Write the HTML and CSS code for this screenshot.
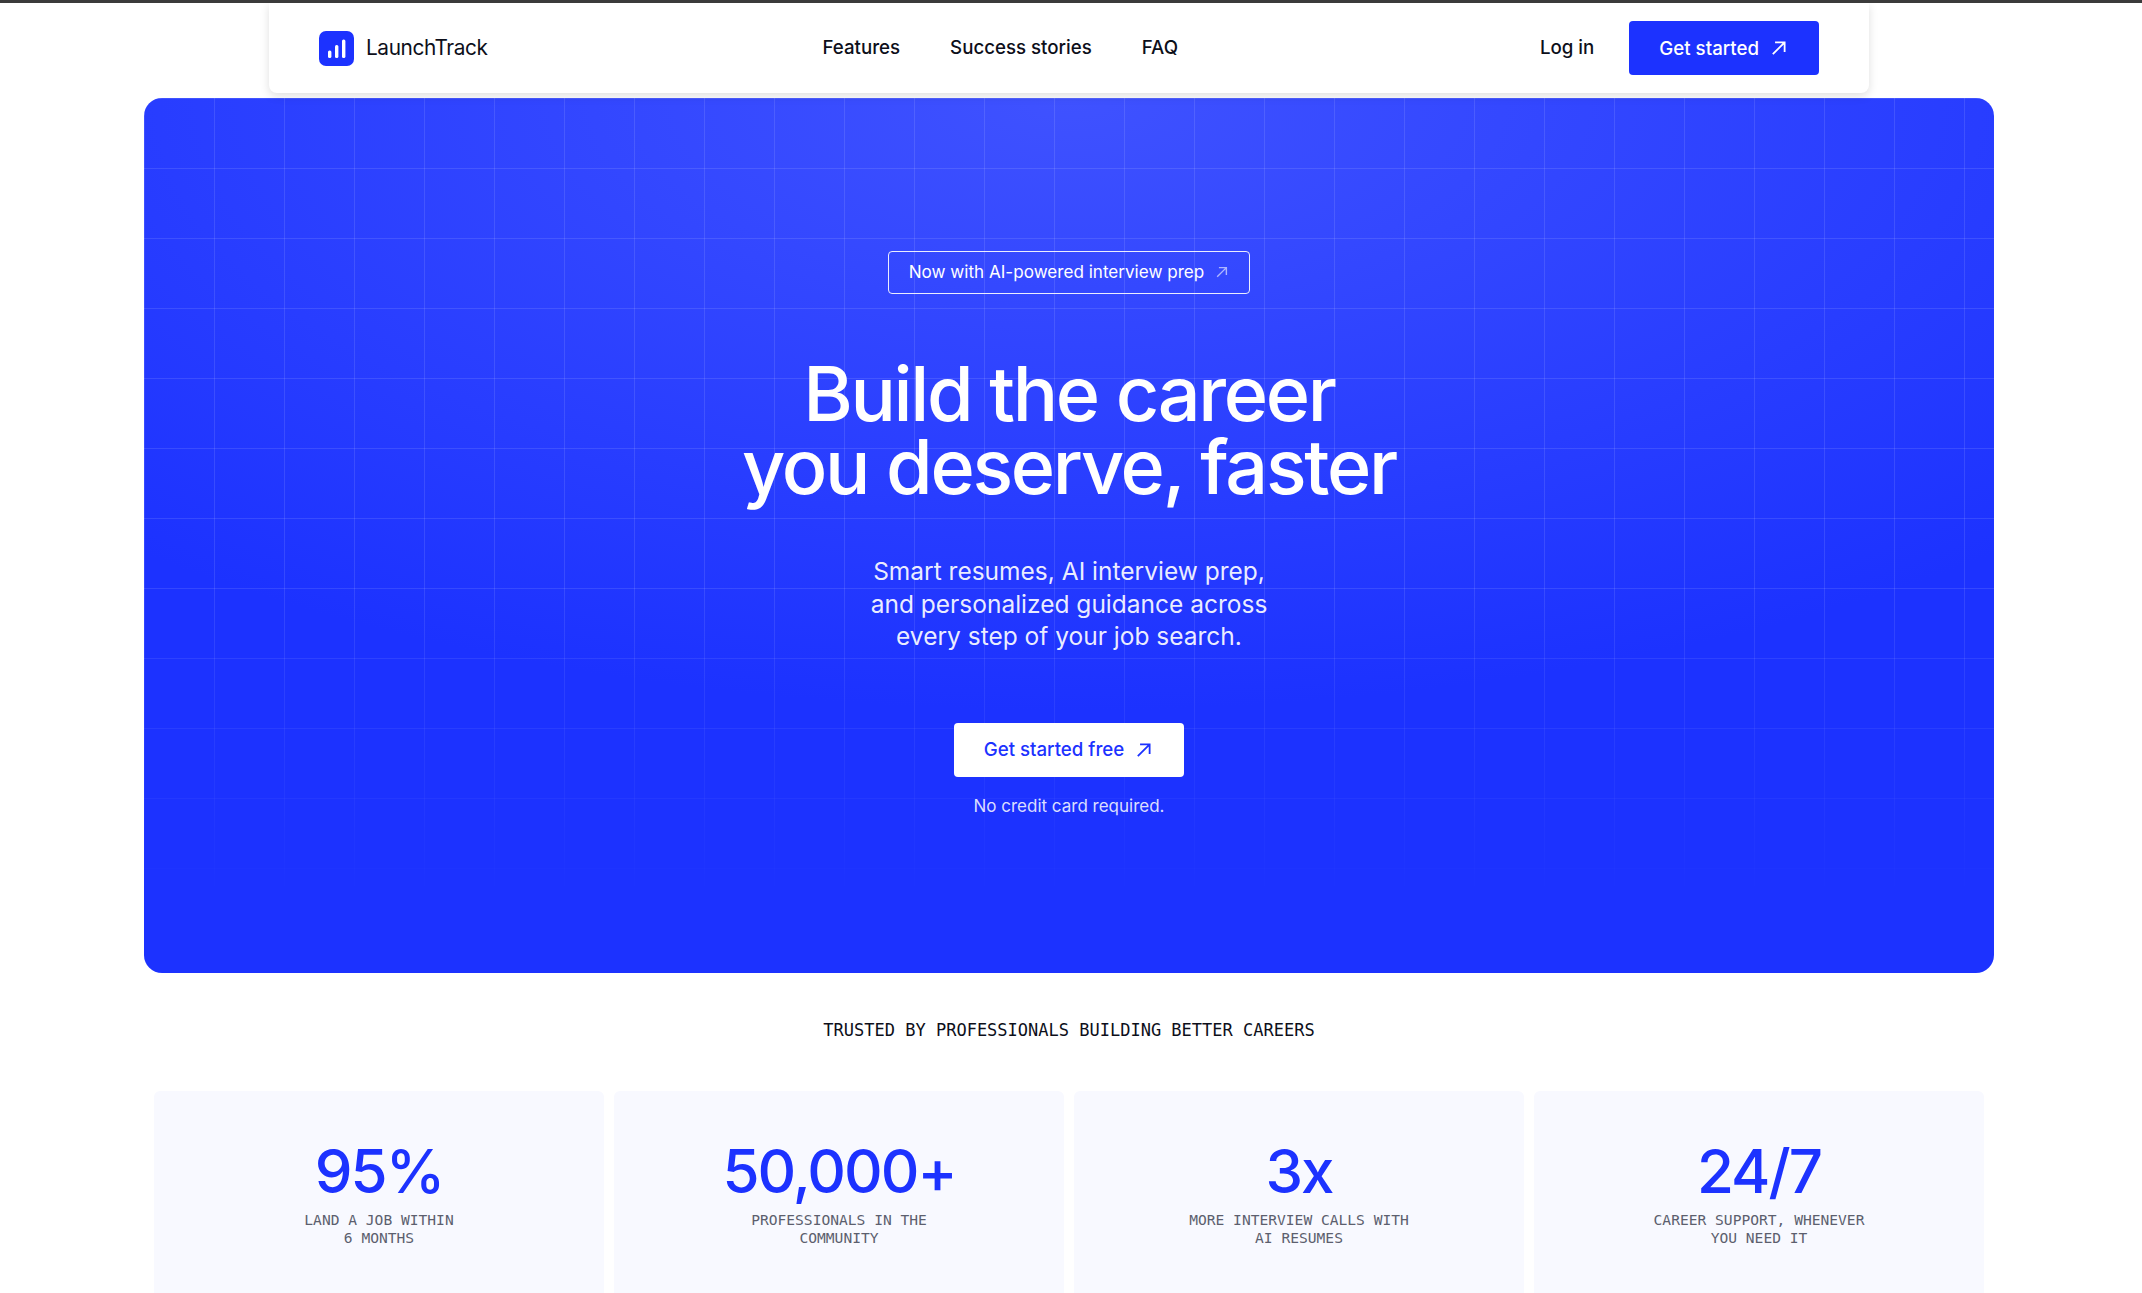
FILE: index.html
```html
<!DOCTYPE html>
<html lang="en">
<head>
    <meta charset="UTF-8" />
    <meta name="viewport" content="width=device-width, initial-scale=1.0"/>
    <title>LaunchTrack</title>
    <link rel="stylesheet" href="styles.css">
</head>
<body>

<header class="topbar">
    <nav class="nav">
        <a href="#" class="brand">
            <span class="brand-mark">
                <svg viewBox="0 0 35 35" width="35" height="35">
                    <rect x="9" y="19.5" width="3.4" height="7.5" rx="1.5" />
                    <rect x="16" y="14" width="3.4" height="13" rx="1.5" />
                    <rect x="23" y="8.5" width="3.4" height="18.5" rx="1.5" />
                </svg>
            </span>
            <span class="brand-name">LaunchTrack</span>
        </a>
        <div class="nav-links">
            <a href="#">Features</a>
            <a href="#">Success stories</a>
            <a href="#">FAQ</a>
        </div>
        <div class="nav-actions">
            <a href="#" class="login">Log in</a>
            <a href="#" class="btn btn-blue">
                Get started
                <svg class="arrow" viewBox="0 0 16 16" width="18" height="18"><path d="M2.5 13.5 13 3M4.5 3H13v8.5" /></svg>
            </a>
        </div>
    </nav>
</header>

<section class="hero">
    <a href="#" class="pill">
        Now with AI-powered interview prep
        <svg class="arrow arrow-small" viewBox="0 0 16 16" width="14" height="14"><path d="M2.5 13.5 13 3M4.5 3H13v8.5" /></svg>
    </a>
    <h1>Build the career<br>you deserve, faster</h1>
    <p class="lead">Smart resumes, AI interview prep,<br>and personalized guidance across<br>every step of your job search.</p>
    <a href="#" class="btn btn-white">
        Get started free
        <svg class="arrow" viewBox="0 0 16 16" width="18" height="18"><path d="M2.5 13.5 13 3M4.5 3H13v8.5" /></svg>
    </a>
    <p class="note">No credit card required.</p>
</section>

<section class="trusted">
    <h2>TRUSTED BY PROFESSIONALS BUILDING BETTER CAREERS</h2>
    <div class="stats">
        <div class="stat">
            <div class="stat-num">95%</div>
            <div class="stat-label">LAND A JOB WITHIN<br>6 MONTHS</div>
        </div>
        <div class="stat">
            <div class="stat-num">50,000+</div>
            <div class="stat-label">PROFESSIONALS IN THE<br>COMMUNITY</div>
        </div>
        <div class="stat">
            <div class="stat-num">3x</div>
            <div class="stat-label">MORE INTERVIEW CALLS WITH<br>AI RESUMES</div>
        </div>
        <div class="stat">
            <div class="stat-num">24/7</div>
            <div class="stat-label">CAREER SUPPORT, WHENEVER<br>YOU NEED IT</div>
        </div>
    </div>
</section>

</body>
</html>
```
FILE: styles.css
```css
html, body {
    height: 100%;
    overflow: hidden;
}
body {
    font-family: Inter, "Liberation Sans", sans-serif;
    color: #0d0f1a;
    background: white;
    margin: 0;
    padding-right: 4px;
    border-top: 3px solid #3b3b3b;
    box-sizing: border-box;
}
a {
    color: inherit;
    text-decoration: none;
}
.topbar {
    display: flex;
    justify-content: center;
    height: 95px;
}
.nav {
    width: 1600px;
    height: 90px;
    box-sizing: border-box;
    padding: 0 50px;
    background: white;
    border-radius: 0 0 8px 8px;
    box-shadow: 0 3px 10px rgba(0, 0, 0, 0.13);
    display: flex;
    align-items: center;
    position: relative;
    z-index: 2;
}
.brand {
    display: flex;
    align-items: center;
    gap: 12px;
    font-size: 20.8px;
    letter-spacing: -0.4px;
}
.brand-name {
    padding-bottom: 2px;
}
.brand-mark {
    width: 35px;
    height: 35px;
    background: #1c32ff;
    border-radius: 7px;
    display: block;
}
.brand-mark svg {
    display: block;
    fill: white;
}
.nav-links {
    display: flex;
    gap: 50px;
    margin-left: 335px;
    padding-bottom: 2px;
    font-size: 18.7px;
    font-weight: 450;
}
.nav-actions {
    display: flex;
    align-items: center;
    gap: 35px;
    margin-left: auto;
    font-size: 18.7px;
    font-weight: 450;
}
.login {
    padding-bottom: 2px;
}
.btn {
    display: inline-flex;
    align-items: center;
    justify-content: center;
    gap: 11px;
    height: 54px;
    box-sizing: border-box;
    padding: 0 31px 0 30px;
    border-radius: 4px;
    font-size: 18.7px;
    font-weight: 500;
}
.btn-blue {
    background: #1c32ff;
    color: white;
}
.btn-white {
    background: white;
    color: #1c32ff;
}
.arrow {
    fill: none;
    stroke: currentColor;
    stroke-width: 1.6;
}
.arrow-small {
    opacity: 0.6;
}
.hero {
    width: 1850px;
    height: 875px;
    box-sizing: border-box;
    margin: 0 auto;
    padding-top: 153px;
    border-radius: 18px;
    color: white;
    text-align: center;
    display: flex;
    flex-direction: column;
    align-items: center;
    position: relative;
    background: radial-gradient(ellipse 75% 70% at 50% 0, #3f52ff 0%, #1c32ff 100%);
}
.hero::before {
    content: "";
    position: absolute;
    inset: 0;
    border-radius: 18px;
    background:
        linear-gradient(rgba(255, 255, 255, 0.11) 1px, transparent 1px) 0 0 / 70px 70px,
        linear-gradient(90deg, rgba(255, 255, 255, 0.11) 1px, transparent 1px) 0 0 / 70px 70px;
    -webkit-mask-image: linear-gradient(black 55%, transparent 92%);
    mask-image: linear-gradient(black 55%, transparent 92%);
}
.hero > * {
    position: relative;
}
.pill {
    display: flex;
    align-items: center;
    gap: 11px;
    height: 43px;
    box-sizing: border-box;
    padding: 0 20px 2px;
    border: 1px solid rgba(255, 255, 255, 0.9);
    border-radius: 4px;
    font-size: 17.1px;
}
h1 {
    margin: 63px 0 0;
    font-size: 75.5px;
    font-weight: 450;
    line-height: 73px;
    letter-spacing: -2.3px;
}
.lead {
    margin: 52px 0 0;
    font-size: 24.5px;
    line-height: 32.5px;
    color: rgba(255, 255, 255, 0.92);
}
.hero .btn-white {
    margin-top: 70px;
}
.note {
    margin: 19px 0 0;
    font-size: 17px;
    color: rgba(255, 255, 255, 0.85);
}
.trusted {
    width: 1830px;
    margin: 0 auto;
    text-align: center;
}
h2 {
    margin: 46px 0 0;
    font-family: "DejaVu Sans Mono", monospace;
    font-size: 17px;
    font-weight: 400;
    line-height: 22px;
}
.stats {
    display: grid;
    grid-template-columns: repeat(4, 1fr);
    gap: 10px;
    margin-top: 50px;
}
.stat {
    height: 210px;
    padding-top: 45px;
    box-sizing: border-box;
    background: #f8f9ff;
    border-radius: 6px 6px 0 0;
}
.stat-num {
    font-size: 60px;
    font-weight: 450;
    line-height: 70px;
    letter-spacing: -2px;
    color: #1c32ff;
}
.stat-label {
    margin-top: 5px;
    font-family: "DejaVu Sans Mono", monospace;
    font-size: 14.6px;
    line-height: 18px;
    color: #5c5f6e;
}
```
